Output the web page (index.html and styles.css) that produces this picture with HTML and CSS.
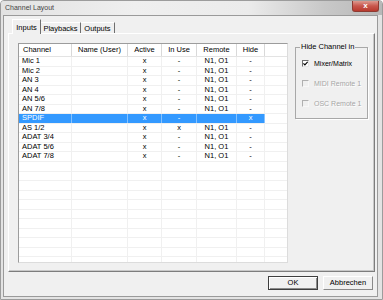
FILE: index.html
```html
<!DOCTYPE html>
<html lang="en">
<head>
    <meta charset="UTF-8">
    <title>Channel Layout</title>
    <link rel="stylesheet" href="styles.css">
</head>
<body>
    <div class="window">
        <div class="titlebar">
            <span class="title">Channel Layout</span>
            <span class="close">x</span>
        </div>
        <div class="client">
            <div class="tabs">
                <div class="tab tab-inputs active">Inputs</div>
                <div class="tab tab-playbacks">Playbacks</div>
                <div class="tab tab-outputs">Outputs</div>
            </div>
            <div class="panel">
                <div class="list">
                    <div class="head">
                        <div class="c left">Channel</div>
                        <div class="c">Name (User)</div>
                        <div class="c">Active</div>
                        <div class="c">In Use</div>
                        <div class="c">Remote</div>
                        <div class="c">Hide</div>
                        <div class="c fill"></div>
                    </div>
                    <div class="row"><div class="c left">Mic 1</div><div class="c"></div><div class="c">x</div><div class="c">-</div><div class="c">N1, O1</div><div class="c">-</div><div class="c fill"></div></div>
                    <div class="row"><div class="c left">Mic 2</div><div class="c"></div><div class="c">x</div><div class="c">-</div><div class="c">N1, O1</div><div class="c">-</div><div class="c fill"></div></div>
                    <div class="row"><div class="c left">AN 3</div><div class="c"></div><div class="c">x</div><div class="c">-</div><div class="c">N1, O1</div><div class="c">-</div><div class="c fill"></div></div>
                    <div class="row"><div class="c left">AN 4</div><div class="c"></div><div class="c">x</div><div class="c">-</div><div class="c">N1, O1</div><div class="c">-</div><div class="c fill"></div></div>
                    <div class="row"><div class="c left">AN 5/6</div><div class="c"></div><div class="c">x</div><div class="c">-</div><div class="c">N1, O1</div><div class="c">-</div><div class="c fill"></div></div>
                    <div class="row"><div class="c left">AN 7/8</div><div class="c"></div><div class="c">x</div><div class="c">-</div><div class="c">N1, O1</div><div class="c">-</div><div class="c fill"></div></div>
                    <div class="row sel"><div class="c left">SPDIF</div><div class="c"></div><div class="c">x</div><div class="c">-</div><div class="c"></div><div class="c">x</div><div class="c fill"></div></div>
                    <div class="row"><div class="c left">AS 1/2</div><div class="c"></div><div class="c">x</div><div class="c">x</div><div class="c">N1, O1</div><div class="c">-</div><div class="c fill"></div></div>
                    <div class="row"><div class="c left">ADAT 3/4</div><div class="c"></div><div class="c">x</div><div class="c">-</div><div class="c">N1, O1</div><div class="c">-</div><div class="c fill"></div></div>
                    <div class="row"><div class="c left">ADAT 5/6</div><div class="c"></div><div class="c">x</div><div class="c">-</div><div class="c">N1, O1</div><div class="c">-</div><div class="c fill"></div></div>
                    <div class="row"><div class="c left">ADAT 7/8</div><div class="c"></div><div class="c">x</div><div class="c">-</div><div class="c">N1, O1</div><div class="c">-</div><div class="c fill"></div></div>
                    <div class="row"><div class="c"></div><div class="c"></div><div class="c"></div><div class="c"></div><div class="c"></div><div class="c"></div><div class="c fill"></div></div>
                    <div class="row"><div class="c"></div><div class="c"></div><div class="c"></div><div class="c"></div><div class="c"></div><div class="c"></div><div class="c fill"></div></div>
                    <div class="row"><div class="c"></div><div class="c"></div><div class="c"></div><div class="c"></div><div class="c"></div><div class="c"></div><div class="c fill"></div></div>
                    <div class="row"><div class="c"></div><div class="c"></div><div class="c"></div><div class="c"></div><div class="c"></div><div class="c"></div><div class="c fill"></div></div>
                    <div class="row"><div class="c"></div><div class="c"></div><div class="c"></div><div class="c"></div><div class="c"></div><div class="c"></div><div class="c fill"></div></div>
                    <div class="row"><div class="c"></div><div class="c"></div><div class="c"></div><div class="c"></div><div class="c"></div><div class="c"></div><div class="c fill"></div></div>
                    <div class="row"><div class="c"></div><div class="c"></div><div class="c"></div><div class="c"></div><div class="c"></div><div class="c"></div><div class="c fill"></div></div>
                    <div class="row"><div class="c"></div><div class="c"></div><div class="c"></div><div class="c"></div><div class="c"></div><div class="c"></div><div class="c fill"></div></div>
                    <div class="row"><div class="c"></div><div class="c"></div><div class="c"></div><div class="c"></div><div class="c"></div><div class="c"></div><div class="c fill"></div></div>
                    <div class="row"><div class="c"></div><div class="c"></div><div class="c"></div><div class="c"></div><div class="c"></div><div class="c"></div><div class="c fill"></div></div>
                    <div class="row"><div class="c"></div><div class="c"></div><div class="c"></div><div class="c"></div><div class="c"></div><div class="c"></div><div class="c fill"></div></div>
                </div>
                <fieldset class="group">
                    <legend>Hide Channel in</legend>
                    <div class="check">
                        <span class="box">
                            <svg width="5" height="5" viewBox="0 0 5 5"><path d="M0.4 2.3 L1.9 3.9 L4.7 0.8" fill="none" stroke="#000" stroke-width="1.2"/></svg>
                        </span>
                        Mixer/Matrix
                    </div>
                    <div class="check disabled"><span class="box"></span>MIDI Remote 1</div>
                    <div class="check disabled"><span class="box"></span>OSC Remote 1</div>
                </fieldset>
            </div>
            <div class="buttons">
                <button class="btn default">OK</button>
                <button class="btn">Abbrechen</button>
            </div>
        </div>
    </div>
</body>
</html>
```

FILE: styles.css
```css
body {
    margin: 0;
    background: #ffffff;
    font-family: "Liberation Sans", Arial, sans-serif;
    font-size: 7.5px;
    color: #000;
}

.window {
    width: 383px;
    height: 300px;
    box-sizing: border-box;
    display: flex;
    flex-direction: column;
    border: 1px solid #9c9c9c;
    border-radius: 4px 4px 0 0;
    background: #e3e3e3;
}

.titlebar {
    height: 14px;
    display: flex;
    align-items: flex-start;
    padding-left: 4px;
    background: linear-gradient(to right, #e2e2e2 0%, #efefef 35%, #ebebeb 65%, #c8c8c8 85%, #b8b8b8 100%);
    border-radius: 3px 3px 0 0;
}

.title {
    font-size: 7px;
    line-height: 14px;
    color: #444;
}

.close {
    margin-left: auto;
    margin-right: 3px;
    width: 27px;
    height: 11px;
    box-sizing: border-box;
    border: 1px solid #8e3b32;
    border-top: none;
    border-radius: 0 0 3px 3px;
    background: linear-gradient(#dd9a8f, #c8564c 50%, #b83a2e);
    color: #fff;
    font-size: 8px;
    font-weight: bold;
    line-height: 10px;
    text-align: center;
}

.client {
    flex: 1;
    display: flex;
    flex-direction: column;
    margin: 0 4px 2px 2px;
    border: 1px solid #9a9a9a;
    background: #f0f0f0;
}

.tabs {
    display: flex;
    align-items: flex-end;
    height: 15px;
    margin: 3px 0 0 8px;
    position: relative;
    z-index: 1;
}

.tab {
    height: 11px;
    margin-bottom: 1px;
    box-sizing: border-box;
    padding-top: 1px;
    line-height: 10px;
    text-align: center;
    border-top: 1px solid #fff;
    border-left: 1px solid #fff;
    border-right: 1px solid #6f6f6f;
    background: #f0f0f0;
}

.tab.active {
    height: 15px;
    margin-bottom: 0;
    padding-top: 3px;
}

.tab-inputs { width: 29px; }
.tab-playbacks { width: 40px; border-left: none; }
.tab-outputs { width: 34px; border-left: none; }

.panel {
    height: 239px;
    margin: -1px 2px 0 4px;
    box-sizing: border-box;
    display: flex;
    align-items: flex-start;
    gap: 7px;
    padding: 9px 6px 8px 9px;
    border: 1px solid;
    border-color: #ffffff #7d7d7d #7d7d7d #ffffff;
    box-shadow: inset -1px -1px 0 #c8c8c8;
}

.list {
    width: 270px;
    height: 220px;
    box-sizing: border-box;
    border: 1px solid;
    border-color: #9c9c9c #dcdcdc #dcdcdc #9c9c9c;
    background: #fff;
    overflow: hidden;
}

.head,
.row {
    display: grid;
    grid-template-columns: 53px 56px 34px 35px 40px 28px 22px;
    box-sizing: border-box;
}

.head {
    height: 13px;
    border-bottom: 1px solid #e3e3e3;
}

.head .c {
    line-height: 12px;
    border-right: 1px solid #d9d9d9;
}

.head .c.left {
    padding-left: 4px;
}

.head .fill {
    border-right: none;
}

.row {
    height: 9.55px;
    border-bottom: 1px solid #f0f0f0;
}

.c {
    text-align: center;
    line-height: 8.5px;
    white-space: nowrap;
    overflow: hidden;
    border-right: 1px solid #f0f0f0;
}

.c.left {
    text-align: left;
    padding-left: 3px;
}

.row .fill {
    border-right: none;
}

.row.sel .c:not(.fill) {
    background: #3399ff;
    color: #fff;
    border-right-color: #85c2ff;
}

.group {
    width: 73px;
    height: 76px;
    box-sizing: border-box;
    margin: 0;
    min-width: 0;
    padding: 7px 0 0 6px;
    border: 1px solid #a8a8a8;
    box-shadow: 1px 1px 0 #fff;
    font-size: 7px;
}

.group legend {
    padding: 0 1px;
    margin-left: -2px;
    line-height: 8px;
    font-size: 7.5px;
}

.check {
    display: flex;
    align-items: center;
    gap: 5px;
    height: 10px;
    margin-bottom: 10px;
    white-space: nowrap;
}

.box {
    flex: none;
    width: 7px;
    height: 7px;
    box-sizing: border-box;
    display: flex;
    align-items: center;
    justify-content: center;
    border: 1px solid;
    border-color: #6e6e6e #e6e6e6 #e6e6e6 #6e6e6e;
    background: #fff;
}

.check.disabled {
    color: #a6a6a6;
    text-shadow: 1px 1px 0 #fff;
}

.check.disabled .box {
    background: #f0f0f0;
    border-color: #b0b0b0 #f8f8f8 #f8f8f8 #b0b0b0;
}

.buttons {
    display: flex;
    justify-content: flex-end;
    gap: 5px;
    margin: 4px 4px 0 0;
}

.btn {
    width: 50px;
    height: 14px;
    padding: 0;
    font: inherit;
    font-size: 7.5px;
    line-height: 12px;
    color: #000;
    background: #f0f0f0;
    border: 1px solid;
    border-color: #ffffff #8a8a8a #8a8a8a #ffffff;
}

.btn.default {
    border: 1px solid #3e3e3e;
    box-shadow: inset 1px 1px 0 #fff, inset -1px -1px 0 #8a8a8a;
}
```
